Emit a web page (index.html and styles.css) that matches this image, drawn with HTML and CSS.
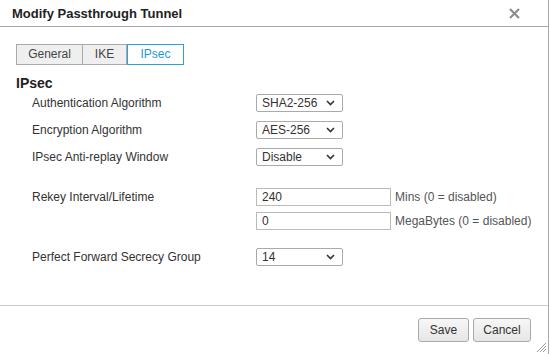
FILE: index.html
```html
<!DOCTYPE html>
<html lang="en">

<head>
  <meta charset="UTF-8" />
  <title>Modify Passthrough Tunnel</title>
  <link rel="stylesheet" href="styles.css">
</head>

<body>
  <div class="dialog">
    <div class="dialog-header">
      <span class="dialog-title">Modify Passthrough Tunnel</span>
      <svg class="dialog-close" width="11" height="11" viewBox="0 0 11 11">
        <path d="M1 1 L10 10 M10 1 L1 10" stroke="#8a8a8a" stroke-width="2" fill="none" />
      </svg>
    </div>

    <div class="dialog-body">
      <div class="tabs">
        <span class="tab tab-general">General</span>
        <span class="tab tab-ike">IKE</span>
        <span class="tab tab-ipsec active">IPsec</span>
      </div>

      <h3 class="section-title">IPsec</h3>

      <div class="form-row">
        <label class="form-label">Authentication Algorithm</label>
        <div class="select-wrap">
          <select><option>SHA2-256</option></select>
          <svg class="chevron" width="9" height="6" viewBox="0 0 9 6"><path d="M1 1 L4.5 4.5 L8 1" stroke="#333" stroke-width="1.6" fill="none" /></svg>
        </div>
      </div>

      <div class="form-row">
        <label class="form-label">Encryption Algorithm</label>
        <div class="select-wrap">
          <select><option>AES-256</option></select>
          <svg class="chevron" width="9" height="6" viewBox="0 0 9 6"><path d="M1 1 L4.5 4.5 L8 1" stroke="#333" stroke-width="1.6" fill="none" /></svg>
        </div>
      </div>

      <div class="form-row">
        <label class="form-label">IPsec Anti-replay Window</label>
        <div class="select-wrap">
          <select><option>Disable</option></select>
          <svg class="chevron" width="9" height="6" viewBox="0 0 9 6"><path d="M1 1 L4.5 4.5 L8 1" stroke="#333" stroke-width="1.6" fill="none" /></svg>
        </div>
      </div>

      <div class="form-row rekey-row">
        <label class="form-label">Rekey Interval/Lifetime</label>
        <div class="input-group">
          <input type="text" value="240" />
          <span class="hint">Mins (0 = disabled)</span>
        </div>
      </div>

      <div class="form-row mb-row">
        <label class="form-label"></label>
        <div class="input-group">
          <input type="text" value="0" />
          <span class="hint">MegaBytes (0 = disabled)</span>
        </div>
      </div>

      <div class="form-row pfs-row">
        <label class="form-label">Perfect Forward Secrecy Group</label>
        <div class="select-wrap">
          <select><option>14</option></select>
          <svg class="chevron" width="9" height="6" viewBox="0 0 9 6"><path d="M1 1 L4.5 4.5 L8 1" stroke="#333" stroke-width="1.6" fill="none" /></svg>
        </div>
      </div>
    </div>

    <div class="dialog-footer">
      <button class="btn btn-save">Save</button>
      <button class="btn btn-cancel">Cancel</button>
      <svg class="resize-grip" width="12" height="12" viewBox="0 0 12 12">
        <path d="M11 2 L2 11 M11 5 L5 11 M11 8 L8 11" stroke="#999" stroke-width="1" fill="none" />
      </svg>
    </div>
  </div>
</body>

</html>
```

FILE: styles.css
```css
body {
  margin: 0;
  background: white;
  font-family: 'Liberation Sans', Arial, sans-serif;
  font-size: 12px;
  color: #333;
}

.dialog {
  width: 548px;
  height: 354px;
  border-right: 1px solid #a8a8a8;
  display: flex;
  flex-direction: column;
  background: white;
}

.dialog-header {
  height: 26px;
  border-bottom: 1px solid #a8a8a8;
  display: flex;
  align-items: center;
  justify-content: space-between;
  padding: 0 28px 0 12px;
}

.dialog-title {
  font-size: 13px;
  font-weight: bold;
  color: #222;
}

.dialog-close {
  margin-top: 1px;
}

.dialog-body {
  height: 278px;
  padding: 17px 0 0 16px;
  box-sizing: border-box;
}

.tabs {
  display: flex;
  height: 21px;
}

.tab {
  box-sizing: border-box;
  height: 21px;
  line-height: 19px;
  text-align: center;
  background: #efefef;
  border: 1px solid #aaa;
  color: #444;
}

.tab-general {
  width: 67px;
}

.tab-ike {
  width: 44px;
  border-left: none;
}

.tab-ipsec {
  width: 57px;
}

.tab.active {
  background: white;
  border-color: #2aa0dc;
  color: #1a9ad8;
}

.section-title {
  margin: 10px 0 3px 0;
  font-size: 14px;
  line-height: 16px;
  font-weight: bold;
  color: #222;
}

.form-row {
  display: flex;
  align-items: center;
  height: 18px;
  margin-bottom: 9px;
}

.form-label {
  width: 224px;
  padding-left: 16px;
  flex-shrink: 0;
}

.select-wrap {
  position: relative;
  width: 87px;
  height: 18px;
}

.select-wrap select {
  appearance: none;
  -webkit-appearance: none;
  width: 87px;
  height: 18px;
  margin: 0;
  padding: 0 0 0 5px;
  border: 1px solid #aaa;
  border-radius: 2px;
  background: white;
  font-family: 'Liberation Sans', Arial, sans-serif;
  font-size: 12px;
  color: #333;
}

.chevron {
  position: absolute;
  right: 8px;
  top: 6px;
  pointer-events: none;
}

.rekey-row {
  margin-top: 22px;
  margin-bottom: 6px;
}

.mb-row {
  margin-bottom: 18px;
}

.input-group {
  display: flex;
  align-items: center;
}

.input-group input {
  box-sizing: border-box;
  width: 135px;
  height: 18px;
  margin: 0;
  padding: 0 5px;
  border: 1px solid #bbb;
  font-family: 'Liberation Sans', Arial, sans-serif;
  font-size: 12px;
  color: #333;
}

.hint {
  margin-left: 4px;
  color: #555;
}

.dialog-footer {
  flex: 1;
  border-top: 1px solid #c8c8c8;
  display: flex;
  justify-content: flex-end;
  align-items: flex-start;
  padding: 12px 17px 0 0;
  position: relative;
}

.btn {
  box-sizing: border-box;
  height: 24px;
  padding: 0;
  margin-left: 4px;
  border: 1px solid #aaa;
  border-radius: 3px;
  background: linear-gradient(#f7f7f7, #e6e6e6);
  font-family: 'Liberation Sans', Arial, sans-serif;
  font-size: 12px;
  color: #333;
}

.btn-save {
  width: 51px;
}

.btn-cancel {
  width: 58px;
}

.resize-grip {
  position: absolute;
  right: 1px;
  bottom: 1px;
}
```
